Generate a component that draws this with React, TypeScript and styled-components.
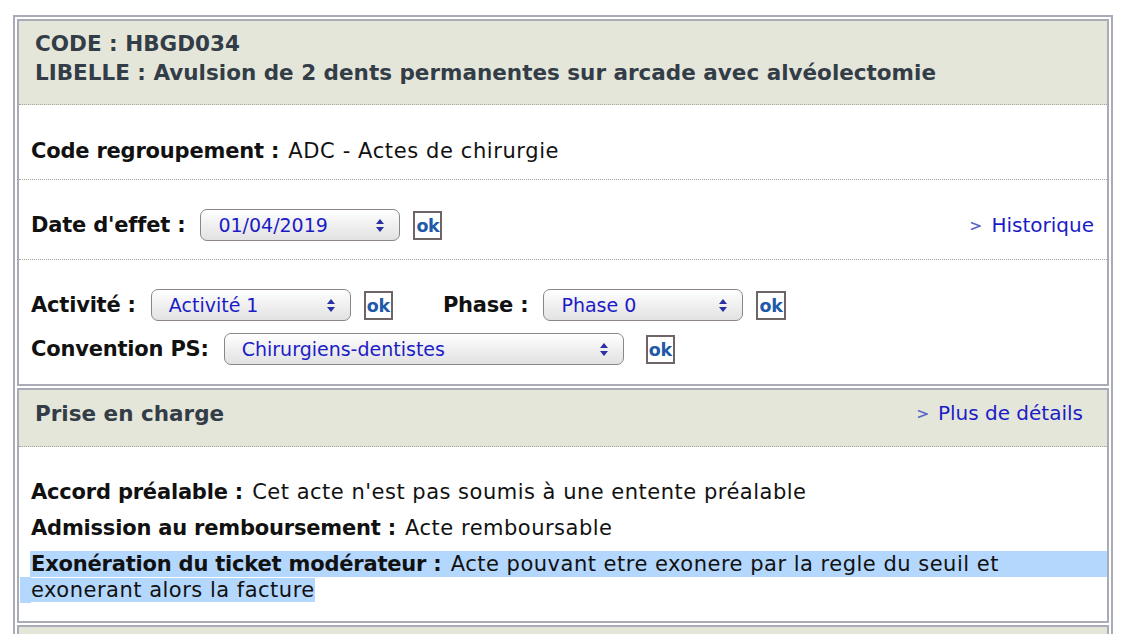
import styled, { createGlobalStyle } from "styled-components"

const GlobalStyle = createGlobalStyle`
  html, body {
    margin: 0;
    padding: 0;
    background: #fff;
  }
  body {
    font-family: "DejaVu Sans", Verdana, sans-serif;
    color: #111;
  }
`

const Page = styled.div`
  padding: 15px 0 0 13px;
  height: 634px;
  overflow: hidden;
  box-sizing: border-box;
`

const Frame = styled.div`
  width: 1100px;
  box-sizing: border-box;
  border: 2px solid #a9acb6;
  padding: 2px;
  display: grid;
  gap: 2px;
`

const Section = styled.section`
  border: 2px solid #a9acb6;
  background: #fff;
`

const Header = styled.div<{ $compact?: boolean }>`
  background: #e5e6da;
  border-bottom: 1px dotted #a6a39a;
  color: #333d47;
  font-family: "DejaVu Sans", Tahoma, sans-serif;
  font-weight: bold;
  font-size: 21.5px;
  line-height: 29px;
  padding: ${(p) => (p.$compact ? "9px 24px 18px 16px" : "8px 16px 17px 16px")};
  display: flex;
  justify-content: space-between;
  align-items: center;
`

const Row = styled.div<{ $top: number; $bottom: number }>`
  padding: ${(p) => `${p.$top}px 13px ${p.$bottom}px 12px`};
  border-bottom: 1px dotted #a6a39a;
  font-size: 21px;
  letter-spacing: 0.6px;
  line-height: 24px;

  &:last-child {
    border-bottom: none;
  }
`

const Line = styled.div`
  display: flex;
  align-items: center;
  gap: 13px;
`

const Label = styled.b<{ $gap?: number }>`
  font-weight: bold;
  letter-spacing: -0.2px;
  white-space: nowrap;
  margin-left: ${(p) => p.$gap ?? 0}px;
  margin-right: 2px;
`

const Select = styled.div<{ $w: number }>`
  position: relative;
  flex: none;
  width: ${(p) => p.$w}px;
  height: 32px;
  box-sizing: border-box;
  border: 1px solid #8d8585;
  border-radius: 7px;
  background: linear-gradient(#ffffff, #f1f1f1 45%, #e2e2e2);
  box-shadow: inset 0 1px 1px rgba(255, 255, 255, 0.8);
  color: #1c1cc6;
  font-size: 19px;
  letter-spacing: 0;
  line-height: 30px;
  padding-left: 17px;

  svg {
    position: absolute;
    right: 15px;
    top: 9px;
  }
`

const OkButton = styled.span<{ $gap?: number }>`
  display: inline-block;
  flex: none;
  margin-left: ${(p) => p.$gap ?? 0}px;
  border: 2px solid #6f6565;
  padding: 0 1px;
  height: 25px;
  line-height: 26px;
  font-weight: bold;
  font-size: 17.5px;
  letter-spacing: -0.3px;
  color: #1f5aa8;
  background: #fff;
`

const Spacer = styled.div`
  flex: 1;
`

const MoreLink = styled.a`
  display: inline-flex;
  align-items: center;
  gap: 10px;
  color: #1c1cc6;
  font-family: "DejaVu Sans", Verdana, sans-serif;
  font-weight: normal;
  font-size: 20px;
  letter-spacing: 0;
  text-decoration: none;
  cursor: pointer;
`

const Body = styled.div`
  padding: 32px 0 18px 1px;
  display: grid;
  gap: 10px;
  font-size: 21px;
  letter-spacing: 0.5px;
  line-height: 26px;
`

const Para = styled.p<{ $marked?: boolean }>`
  margin: 0;
  padding: 0 12px 0 11px;
  ${(p) =>
    p.$marked &&
    `
    background:
      linear-gradient(#b4d7fe, #b4d7fe) 10px 0 / calc(100% - 10px) 26px no-repeat,
      linear-gradient(#b4d7fe, #b4d7fe) 0 26px / 11px 26px no-repeat;
    span { background: #b4d7fe; }
  `}
`

const Arrows = () => (
  <svg width="8" height="13" viewBox="0 0 8 13">
    <path d="M4 0 L8 5 L0 5 Z" fill="#2a2fa6" />
    <path d="M0 8 L8 8 L4 13 Z" fill="#2a2fa6" />
  </svg>
)

const Chevron = () => (
  <svg width="11" height="9" viewBox="0 0 11 9">
    <path d="M1 1.5 L10 5 L1 8.5" fill="none" stroke="#5a68c4" strokeWidth="1.7" />
  </svg>
)

const Dropdown = ({ value, width }: { value: string; width: number }) => (
  <Select $w={width}>
    {value}
    <Arrows />
  </Select>
)

export default function App() {
  return (
    <Page>
      <GlobalStyle />
      <Frame>
        <Section>
          <Header>
            <div>
              CODE : HBGD034
              <br />
              LIBELLE : Avulsion de 2 dents permanentes sur arcade avec alvéolectomie
            </div>
          </Header>
          <Row $top={34} $bottom={16}>
            <Label>Code regroupement :</Label> ADC - Actes de chirurgie
          </Row>
          <Row $top={29} $bottom={18}>
            <Line>
              <Label>Date d'effet :</Label>
              <Dropdown value="01/04/2019" width={200} />
              <OkButton>ok</OkButton>
              <Spacer />
              <MoreLink>
                <Chevron />
                Historique
              </MoreLink>
            </Line>
          </Row>
          <Row $top={29} $bottom={19}>
            <Line>
              <Label>Activité :</Label>
              <Dropdown value="Activité 1" width={200} />
              <OkButton>ok</OkButton>
              <Label $gap={37}>Phase :</Label>
              <Dropdown value="Phase 0" width={200} />
              <OkButton>ok</OkButton>
            </Line>
            <Line style={{ marginTop: 12 }}>
              <Label>Convention PS:</Label>
              <Dropdown value="Chirurgiens-dentistes" width={400} />
              <OkButton $gap={9}>ok</OkButton>
            </Line>
          </Row>
        </Section>
        <Section>
          <Header $compact>
            <span>Prise en charge</span>
            <MoreLink>
              <Chevron />
              Plus de détails
            </MoreLink>
          </Header>
          <Body>
            <Para>
              <Label>Accord préalable :</Label> Cet acte n'est pas soumis à une entente préalable
            </Para>
            <Para>
              <Label>Admission au remboursement :</Label> Acte remboursable
            </Para>
            <Para $marked>
              <span>
                <Label>Exonération du ticket modérateur :</Label> Acte pouvant etre exonere par la
                regle du seuil et exonerant alors la facture
              </span>
            </Para>
          </Body>
        </Section>
        <Section>
          <Header $compact>
            <span>&nbsp;</span>
          </Header>
        </Section>
      </Frame>
    </Page>
  )
}
